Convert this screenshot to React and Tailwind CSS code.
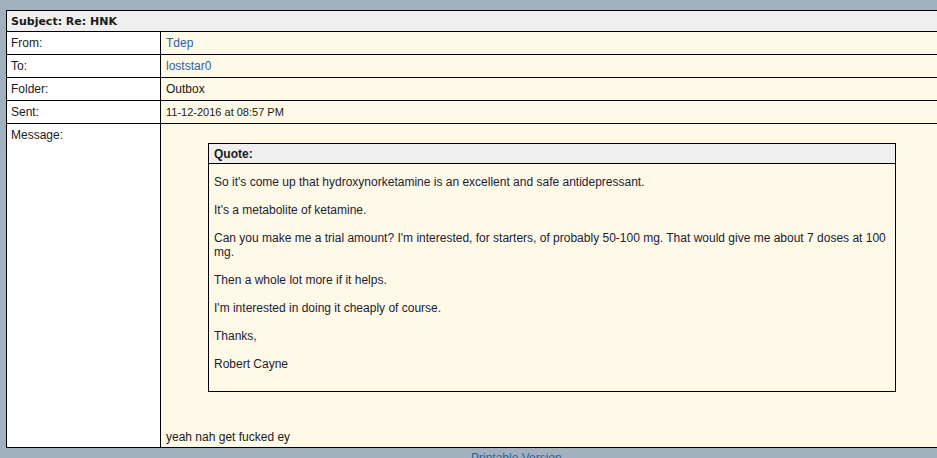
import React from "react";

const rows = [
  { label: "From:", value: "Tdep", link: true },
  { label: "To:", value: "loststar0", link: true },
  { label: "Folder:", value: "Outbox" },
  { label: "Sent:", value: "11-12-2016 at 08:57 PM", small: true },
];

const App = () => {
  return (
    <div
      className="h-[458px] w-[937px] overflow-hidden bg-[#a1b1bd] text-[#1a1a1a]"
      style={{ fontFamily: '"Liberation Sans", Arial, sans-serif' }}
    >
      <div className="pl-[6px] pt-[10px]">
        <div className="w-[960px] border border-black">
          <div
            className="h-[21px] border-b border-black bg-[#efefef] pl-[4px] text-[11px] leading-[21px] font-bold"
            style={{ fontFamily: '"DejaVu Sans", Verdana, sans-serif' }}
          >
            Subject: Re: HNK
          </div>

          {rows.map((row) => (
            <div key={row.label} className="flex h-[23px] border-b border-black">
              <div className="w-[154px] shrink-0 border-r border-black bg-white pl-[4px] text-[12px] leading-[22px]">
                {row.label}
              </div>
              <div
                className={`flex-1 bg-[#fff9e7] pl-[5px] leading-[22px] ${
                  row.small ? "text-[11px]" : "text-[12px]"
                } ${row.link ? "text-[#2d63a3]" : ""}`}
              >
                {row.value}
              </div>
            </div>
          ))}

          <div className="flex h-[323px]">
            <div className="w-[154px] shrink-0 border-r border-black bg-white pl-[4px] pt-[4px] text-[12px] leading-[14px]">
              Message:
            </div>
            <div className="flex flex-1 flex-col bg-[#fff9e7] pl-[5px] text-[12px] leading-[14px]">
              <div className="ml-[42px] mt-[19px] w-[688px] border border-black">
                <div className="h-[20px] border-b border-black bg-[#efefef] pl-[5px] font-bold leading-[20px]">
                  Quote:
                </div>
                <div className="px-[5px] pt-[11px] pb-[20px] text-[#1c1c33]">
                  So it's come up that hydroxynorketamine is an excellent and safe antidepressant.
                  <br />
                  <br />
                  It's a metabolite of ketamine.
                  <br />
                  <br />
                  Can you make me a trial amount? I'm interested, for starters, of probably 50-100 mg. That would give me about 7 doses at 100
                  <br />
                  mg.
                  <br />
                  <br />
                  Then a whole lot more if it helps.
                  <br />
                  <br />
                  I'm interested in doing it cheaply of course.
                  <br />
                  <br />
                  Thanks,
                  <br />
                  <br />
                  Robert Cayne
                </div>
              </div>
              <div className="mt-auto pb-[3px]">yeah nah get fucked ey</div>
            </div>
          </div>
        </div>
        <div className="pl-[465px] pt-[1px] text-[12px] text-[#2d63a3]">
          Printable Version
        </div>
      </div>
    </div>
  );
};

export default App;
